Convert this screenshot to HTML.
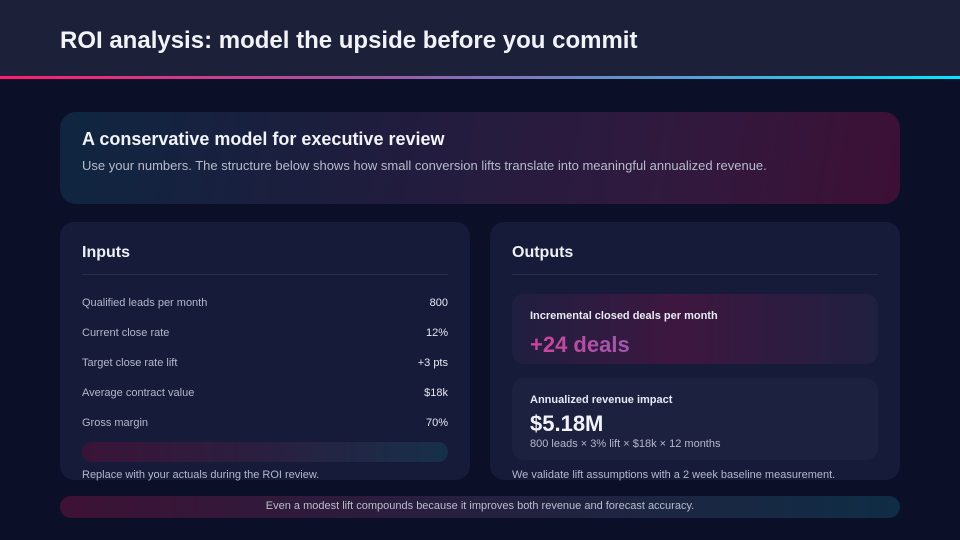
<!DOCTYPE html>
<html><head><meta charset="utf-8"><style>
*{margin:0;padding:0;box-sizing:border-box}
body{width:960px;height:540px;background:#0b0f28;font-family:"Liberation Sans",sans-serif;position:relative;overflow:hidden;color:#e8eaf3}
.hdr{position:absolute;left:0;top:0;width:960px;height:76px;background:#1c2039}
.hdr h1{position:absolute;left:60px;top:27px;font-size:24px;font-weight:bold;color:#f2f3f8}
.line{position:absolute;left:0;top:76px;width:960px;height:3px;background:linear-gradient(90deg,#ff1d6e,#9a5ba8 40%,#4ea8d8 75%,#00e8ff)}
.hero{position:absolute;left:60px;top:112px;width:840px;height:92px;border-radius:16px;background:linear-gradient(100deg,#0f2640 0%,#1e1d3e 35%,#2f1a3e 70%,#3d1036 100%)}
.hero h2{position:absolute;left:22px;top:17px;font-size:18px;font-weight:bold;color:#f2f3f8}
.hero p{position:absolute;left:22px;top:46px;font-size:13px;color:#b7bbcc}
.panel{position:absolute;top:222px;width:410px;height:258px;border-radius:14px;background:#161b3a}
.panel h3{position:absolute;left:22px;top:22px;font-size:16px;font-weight:bold;color:#eef0f6}
.sep{position:absolute;left:22px;right:22px;top:52px;height:1px;background:#262d4d}
.row{position:absolute;left:22px;right:22px;font-size:11px;color:#b4b8ca;display:flex;justify-content:space-between}
.row b{font-weight:normal;color:#e6e8f0}
.bar{position:absolute;left:22px;right:22px;top:220px;height:20px;border-radius:10px;background:linear-gradient(90deg,#3a1438,#2a1f40 50%,#16304a)}
.note{position:absolute;left:22px;top:247px;font-size:11px;color:#b4b8ca}
.card{position:absolute;left:22px;right:22px;border-radius:12px;background:#1d2140}
.card .t{position:absolute;left:18px;font-size:11px;font-weight:bold;color:#e8eaf2}
.bot{position:absolute;left:60px;top:496px;width:840px;height:22px;border-radius:11px;background:linear-gradient(90deg,#3d1236,#25203f 50%,#0f2d45);text-align:center;font-size:11px;line-height:20px;color:#b9bdcd}
</style></head><body>
<div class="hdr"><h1>ROI analysis: model the upside before you commit</h1></div>
<div class="line"></div>
<div class="hero"><h2>A conservative model for executive review</h2><p>Use your numbers. The structure below shows how small conversion lifts translate into meaningful annualized revenue.</p></div>
<div class="panel" style="left:60px">
<h3>Inputs</h3><div class="sep"></div>
<div class="row" style="top:75px"><span>Qualified leads per month</span><b>800</b></div>
<div class="row" style="top:105px"><span>Current close rate</span><b>12%</b></div>
<div class="row" style="top:135px"><span>Target close rate lift</span><b>+3 pts</b></div>
<div class="row" style="top:165px"><span>Average contract value</span><b>$18k</b></div>
<div class="row" style="top:195px"><span>Gross margin</span><b>70%</b></div>
<div class="bar"></div>
<div class="note">Replace with your actuals during the ROI review.</div>
</div>
<div class="panel" style="left:490px">
<h3>Outputs</h3><div class="sep"></div>
<div class="card" style="top:72px;height:70px;background:linear-gradient(90deg,#1f1f40 0%,#3e1740 45%,#1f2040 100%)">
<div class="t" style="top:16px">Incremental closed deals per month</div>
<div style="position:absolute;left:18px;top:38px;font-size:22px;font-weight:bold;background:linear-gradient(90deg,#d0429a,#9d5aae);-webkit-background-clip:text;color:transparent">+24 deals</div>
</div>
<div class="card" style="top:156px;height:82px">
<div class="t" style="top:16px">Annualized revenue impact</div>
<div style="position:absolute;left:18px;top:33px;font-size:22px;font-weight:bold;color:#f2f3f8">$5.18M</div>
<div style="position:absolute;left:18px;top:60px;font-size:11px;color:#b4b8ca">800 leads × 3% lift × $18k × 12 months</div>
</div>
<div class="note">We validate lift assumptions with a 2 week baseline measurement.</div>
</div>
<div class="bot">Even a modest lift compounds because it improves both revenue and forecast accuracy.</div>
</body></html>
